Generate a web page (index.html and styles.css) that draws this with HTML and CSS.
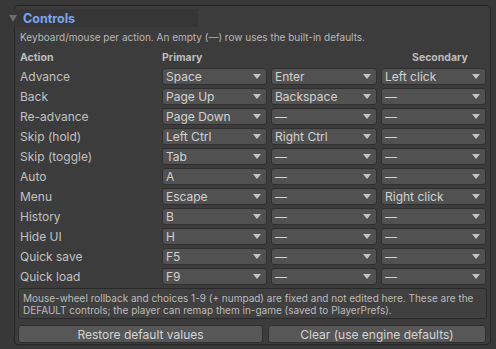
FILE: index.html
```html
<!DOCTYPE html>
<html lang="en">
<head>
    <meta charset="UTF-8">
    <meta name="viewport" content="width=device-width, initial-scale=1.0">
    <title>Controls</title>
    <link rel="stylesheet" href="styles.css">
</head>
<body>

    <!-- inspector panel -->
    <div class="panel">
      <div class="foldout">
        <span class="fold-arrow"></span>
        <span class="fold-title">Controls</span>
      </div>

      <p class="desc">Keyboard/mouse per action. An empty (—) row uses the built-in defaults.</p>

      <div class="bindings">
        <div class="head">Action</div>
        <div class="head">Primary</div>
        <div class="head"></div>
        <div class="head head-secondary">Secondary</div>

        <div class="label">Advance</div>
        <div class="dropdown">Space</div>
        <div class="dropdown">Enter</div>
        <div class="dropdown">Left click</div>

        <div class="label">Back</div>
        <div class="dropdown">Page Up</div>
        <div class="dropdown">Backspace</div>
        <div class="dropdown">—</div>

        <div class="label">Re-advance</div>
        <div class="dropdown">Page Down</div>
        <div class="dropdown">—</div>
        <div class="dropdown">—</div>

        <div class="label">Skip (hold)</div>
        <div class="dropdown">Left Ctrl</div>
        <div class="dropdown">Right Ctrl</div>
        <div class="dropdown">—</div>

        <div class="label">Skip (toggle)</div>
        <div class="dropdown">Tab</div>
        <div class="dropdown">—</div>
        <div class="dropdown">—</div>

        <div class="label">Auto</div>
        <div class="dropdown">A</div>
        <div class="dropdown">—</div>
        <div class="dropdown">—</div>

        <div class="label">Menu</div>
        <div class="dropdown">Escape</div>
        <div class="dropdown">—</div>
        <div class="dropdown">Right click</div>

        <div class="label">History</div>
        <div class="dropdown">B</div>
        <div class="dropdown">—</div>
        <div class="dropdown">—</div>

        <div class="label">Hide UI</div>
        <div class="dropdown">H</div>
        <div class="dropdown">—</div>
        <div class="dropdown">—</div>

        <div class="label">Quick save</div>
        <div class="dropdown">F5</div>
        <div class="dropdown">—</div>
        <div class="dropdown">—</div>

        <div class="label">Quick load</div>
        <div class="dropdown">F9</div>
        <div class="dropdown">—</div>
        <div class="dropdown">—</div>
      </div>

      <div class="helpbox">Mouse-wheel rollback and choices 1-9 (+ numpad) are fixed and not edited here. These are the DEFAULT controls; the player can remap them in-game (saved to PlayerPrefs).</div>

      <div class="buttons">
        <button class="btn">Restore default values</button>
        <button class="btn">Clear (use engine defaults)</button>
      </div>
    </div>

</body>
</html>
```

FILE: styles.css
```css
/* base */
body, html {
    margin: 0;
    padding: 0;
    background: #383838;
    font-family: 'Inter', 'Noto Sans', sans-serif;
    color: #c4c4c4;
}

/* panel */
.panel {
    margin: 5px 5px 0 14px;
    height: 340px;
    border: 1px solid #262626;
    border-radius: 4px;
    background: #3c3c3c;
    padding: 3px 3px 0 5px;
    box-sizing: border-box;
}

/* foldout header */
.foldout {
    display: flex;
    align-items: center;
    height: 18px;
    width: 190px;
    margin-left: -12px;
    background: #363636;
}

.fold-arrow {
    width: 0;
    height: 0;
    margin-left: 1px;
    border-left: 4px solid transparent;
    border-right: 4px solid transparent;
    border-top: 7px solid #6b6b6b;
}

.fold-title {
    margin-left: 6px;
    font-size: 12.5px;
    font-weight: 700;
    color: #7aa6ee;
}

.desc {
    margin: 4px 0 0 0;
    height: 13px;
    line-height: 13px;
    font-size: 10px;
    color: #b8b8b8;
}

/* bindings table */
.bindings {
    display: grid;
    grid-template-columns: 138px 105px 106px 105px;
    column-gap: 4px;
    row-gap: 3px;
    margin-top: 4px;
}

.head {
    font-size: 10.5px;
    font-weight: 700;
    color: #bdbdbd;
    height: 19px;
    line-height: 19px;
    margin-bottom: -2px;
}

.head-secondary {
    padding-left: 31px;
}

.label {
    font-size: 12px;
    line-height: 17px;
    color: #c2c2c2;
}

.dropdown {
    display: flex;
    justify-content: space-between;
    align-items: center;
    height: 17px;
    box-sizing: border-box;
    padding: 0 5px 0 3px;
    background: #515151;
    border: 1px solid #2f2f2f;
    border-radius: 3px;
    font-size: 12px;
    color: #d2d2d2;
}

.dropdown::after {
    content: "";
    width: 0;
    height: 0;
    border-left: 4px solid transparent;
    border-right: 4px solid transparent;
    border-top: 5px solid #c4c4c4;
}

/* help box */
.helpbox {
    margin: 3px 0 0 -2px;
    height: 31px;
    box-sizing: border-box;
    padding: 3px 4px;
    background: #404040;
    border: 1px solid #2a2a2a;
    border-radius: 3px;
    font-size: 10px;
    line-height: 12px;
    color: #bcbcbc;
}

/* buttons */
.buttons {
    display: grid;
    grid-template-columns: 245px 218px;
    column-gap: 5px;
    margin: 6px 0 0 -2px;
}

.btn {
    height: 18px;
    padding: 0;
    background: #575757;
    border: 1px solid #2f2f2f;
    border-radius: 3px;
    font-family: 'Inter', 'Noto Sans', sans-serif;
    font-size: 12px;
    color: #d4d4d4;
}
```
